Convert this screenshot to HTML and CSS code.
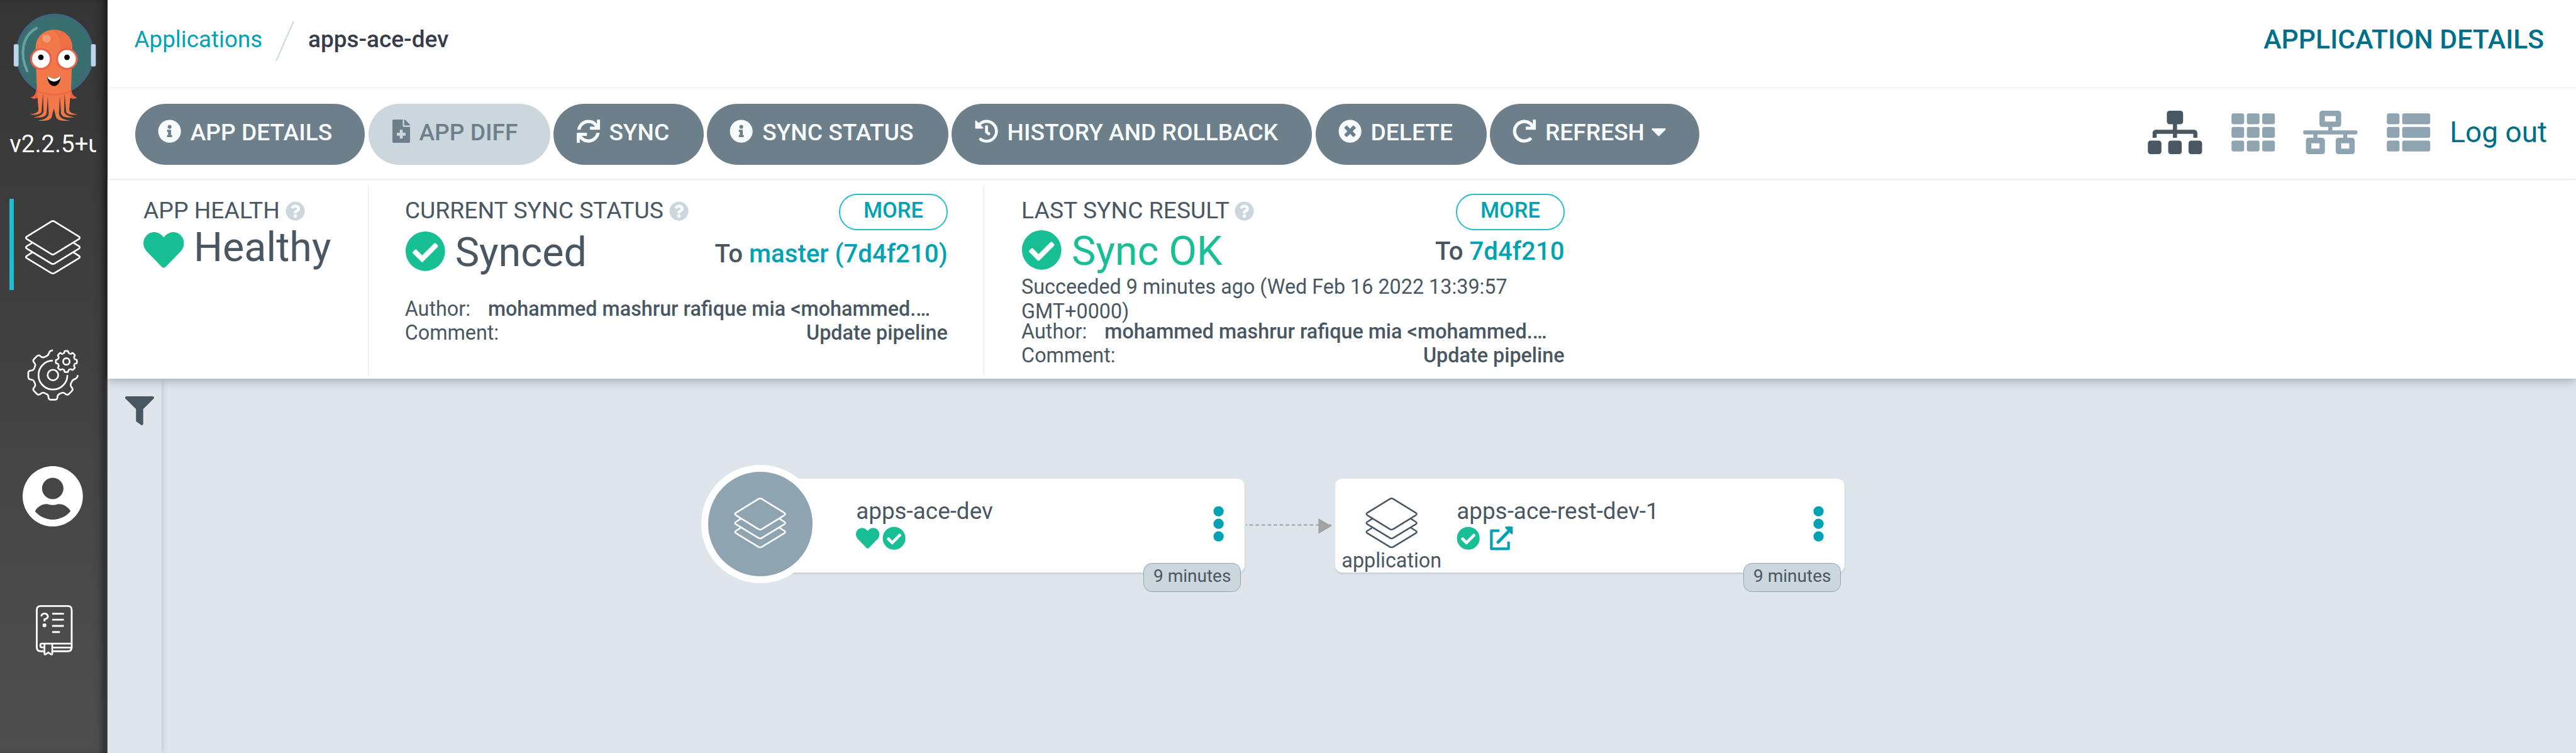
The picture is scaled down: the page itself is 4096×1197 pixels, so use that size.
FILE: index.html
```html
<!DOCTYPE html>
<html lang="en">
<head>
<meta charset="utf-8">
<title>apps-ace-dev - Application Details</title>
<link rel="stylesheet" href="styles.css">
</head>
<body>
<svg class="defs" aria-hidden="true">
  <symbol id="i-info" viewBox="0 0 512 512"><path d="M256 8C119.043 8 8 119.083 8 256c0 136.997 111.043 248 248 248s248-111.003 248-248C504 119.083 392.957 8 256 8zm0 110c23.196 0 42 18.804 42 42s-18.804 42-42 42-42-18.804-42-42 18.804-42 42-42zm56 254c0 6.627-5.373 12-12 12h-88c-6.627 0-12-5.373-12-12v-24c0-6.627 5.373-12 12-12h12v-64h-12c-6.627 0-12-5.373-12-12v-24c0-6.627 5.373-12 12-12h64c6.627 0 12 5.373 12 12v100h12c6.627 0 12 5.373 12 12v24z"/></symbol>
  <symbol id="i-check" viewBox="0 0 512 512"><path d="M504 256c0 136.967-111.033 248-248 248S8 392.967 8 256 119.033 8 256 8s248 111.033 248 248zM227.314 387.314l184-184c6.248-6.248 6.248-16.379 0-22.627l-22.627-22.627c-6.248-6.249-16.379-6.249-22.628 0L216 308.118l-70.059-70.059c-6.248-6.248-16.379-6.248-22.628 0l-22.627 22.627c-6.248 6.248-6.248 16.379 0 22.627l104 104c6.249 6.249 16.379 6.249 22.628.001z"/></symbol>
  <symbol id="i-times" viewBox="0 0 512 512"><path d="M256 8C119 8 8 119 8 256s111 248 248 248 248-111 248-248S393 8 256 8zm121.6 313.1c4.7 4.7 4.7 12.3 0 17L338 377.6c-4.7 4.7-12.3 4.7-17 0L256 312l-65.1 65.6c-4.7 4.7-12.3 4.7-17 0L134.4 338c-4.7-4.7-4.7-12.3 0-17l65.6-65-65.6-65.1c-4.7-4.7-4.7-12.3 0-17l39.6-39.6c4.7-4.7 12.3-4.7 17 0l65 65.7 65.1-65.6c4.7-4.7 12.3-4.7 17 0l39.6 39.6c4.7 4.7 4.7 12.3 0 17L312 256l65.6 65.1z"/></symbol>
  <symbol id="i-help" viewBox="0 0 512 512"><path d="M504 256c0 136.997-111.043 248-248 248S8 392.997 8 256C8 119.083 119.043 8 256 8s248 111.083 248 248zM262.655 90c-54.497 0-89.255 22.957-116.549 63.758-3.536 5.286-2.353 12.415 2.715 16.258l34.699 26.31c5.205 3.947 12.621 3.008 16.665-2.122 17.864-22.658 30.113-35.797 57.303-35.797 20.429 0 45.698 13.148 45.698 32.958 0 14.976-12.363 22.667-32.534 33.976C247.128 238.528 216 254.941 216 296v4c0 6.627 5.373 12 12 12h56c6.627 0 12-5.373 12-12v-1.333c0-28.462 83.186-29.647 83.186-106.667 0-58.002-60.165-102-116.531-102zM256 338c-25.365 0-46 20.635-46 46 0 25.364 20.635 46 46 46s46-20.636 46-46c0-25.365-20.635-46-46-46z"/></symbol>
  <symbol id="i-heart" viewBox="0 0 512 512"><path d="M462.3 62.6C407.5 15.9 326 24.3 275.7 76.2L256 96.5l-19.7-20.3C186.1 24.3 104.5 15.9 49.7 62.6c-62.8 53.6-66.1 149.8-9.9 207.9l193.5 199.8c12.5 12.9 32.8 12.9 45.3 0l193.5-199.8c56.3-58.1 53-154.3-9.8-207.9z"/></symbol>
  <symbol id="i-file" viewBox="0 0 384 512"><path d="M377 105L279.1 7c-4.5-4.5-10.6-7-17-7H256v128h128v-6.1c0-6.3-2.5-12.4-7-16.9zm-153 31V0H24C10.7 0 0 10.7 0 24v464c0 13.3 10.7 24 24 24h336c13.3 0 24-10.7 24-24V160H248c-13.2 0-24-10.8-24-24zm64 160v48c0 4.4-3.6 8-8 8h-56v56c0 4.4-3.6 8-8 8h-48c-4.4 0-8-3.6-8-8v-56h-56c-4.4 0-8-3.6-8-8v-48c0-4.4 3.6-8 8-8h56v-56c0-4.4 3.6-8 8-8h48c4.4 0 8 3.6 8 8v56h56c4.4 0 8 3.6 8 8z"/></symbol>
  <symbol id="i-sync" viewBox="0 0 512 512"><path d="M440.65 12.57l4 82.77A247.16 247.16 0 0 0 255.83 8C134.73 8 33.91 94.92 12.29 209.82A12 12 0 0 0 24.09 224h49.05a12 12 0 0 0 11.67-9.26 175.91 175.91 0 0 1 317-56.94l-101.46-4.86a12 12 0 0 0-12.57 12v47.41a12 12 0 0 0 12 12H500a12 12 0 0 0 12-12V12a12 12 0 0 0-12-12h-47.37a12 12 0 0 0-11.98 12.57zM255.83 432a175.61 175.61 0 0 1-146-77.8l101.8 4.87a12 12 0 0 0 12.57-12v-47.4a12 12 0 0 0-12-12H12a12 12 0 0 0-12 12V500a12 12 0 0 0 12 12h47.35a12 12 0 0 0 12-12.6l-4.15-82.57A247.17 247.17 0 0 0 255.83 504c121.11 0 221.93-86.92 243.55-201.82a12 12 0 0 0-11.8-14.18h-49.05a12 12 0 0 0-11.67 9.26A175.86 175.86 0 0 1 255.83 432z"/></symbol>
  <symbol id="i-history" viewBox="0 0 512 512"><path d="M504 255.531c.253 136.64-111.18 248.372-247.82 248.468-59.015.042-113.223-20.53-155.822-54.911-11.077-8.94-11.905-25.541-1.839-35.607l11.267-11.267c8.609-8.609 22.353-9.551 31.891-1.984C173.062 425.135 212.781 440 256 440c101.705 0 184-82.311 184-184 0-101.705-82.311-184-184-184-48.814 0-93.149 18.969-126.068 49.932l50.754 50.754c10.08 10.08 2.941 27.314-11.313 27.314H24c-8.837 0-16-7.163-16-16V38.627c0-14.254 17.234-21.393 27.314-11.314l49.372 49.372C129.209 34.136 189.552 8 256 8c136.81 0 247.747 110.78 248 247.531zm-180.912 78.784l9.823-12.63c8.138-10.463 6.253-25.542-4.21-33.679L288 256.349V152c0-13.255-10.745-24-24-24h-16c-13.255 0-24 10.745-24 24v135.651l65.409 50.874c10.463 8.137 25.541 6.253 33.679-4.21z"/></symbol>
  <symbol id="i-redo" viewBox="0 0 512 512"><path d="M500.33 0h-47.41a12 12 0 0 0-12 12.57l4 82.76A247.42 247.42 0 0 0 256 8C119.34 8 7.9 119.53 8 256.19 8.1 393.07 119.1 504 256 504a247.1 247.1 0 0 0 166.18-63.91 12 12 0 0 0 .48-17.43l-34-34a12 12 0 0 0-16.38-.55A176 176 0 1 1 402.1 157.8l-101.53-4.87a12 12 0 0 0-12.57 12v47.41a12 12 0 0 0 12 12h200.33a12 12 0 0 0 12-12V12a12 12 0 0 0-12-12z"/></symbol>
  <symbol id="i-stack" viewBox="0 0 92 90"><g fill="none" stroke="currentColor" stroke-width="2.8" stroke-linejoin="round"><path d="M43 2.4Q46 .6 49 2.4L89 27Q92.4 29.2 89 31.4L49 56Q46 58 43 56L3 31.4Q-.4 29.2 3 27Z"/><path d="M80 37.4L89 43Q92.4 45.2 89 47.4L49 71.8Q46 73.6 43 71.8L3 47.4Q-.4 45.2 3 43L12 37.4"/><path d="M80 53.4L89 59Q92.4 61.2 89 63.4L49 87.6Q46 89.4 43 87.6L3 63.4Q-.4 61.2 3 59L12 53.4"/></g></symbol>
</svg>
<div class="app">
  <nav class="sidebar">
    <svg class="logo" viewBox="20 20 142 184">
      <ellipse cx="91" cy="90" rx="63" ry="65.5" fill="#3a6f70" stroke="#406581" stroke-width="3.4"/>
      <rect x="23" y="73.5" width="8" height="37" rx="2.5" fill="#bdd5ea"/>
      <rect x="151.200" y="73.500" width="8" height="37" rx="2.5" fill="#bdd5ea"/>
      <path d="M60.700 47C36 60 33 92 45.300 118" fill="none" stroke="#69a19f" stroke-width="4.200" stroke-linecap="round"/>
      <path d="M61 145C60 156 57 161 51 161.500C53 165 63 165 66 160ZM118 145C119 156 122 161 128 161.500C126 165 116 165 113 160Z" fill="#ea6148"/>
      <path d="M59.300 80C59.300 62 72 49.400 90 49.400S120.300 62 120.300 80L118.500 140L115 182C115 187 121 189 129.500 190C122 191.500 113 191 110 186L107.500 155L106.500 185C107 190 113 193.500 124 194.500C115 196 103 195.500 101.500 188L99.500 160L98 188C98 195 105 199 116 200C109 201.500 95 201 93 194L89.500 180L86 194C84 201 70 201.500 63 200C74 199 81 195 81 188L79.500 160L77.500 188C76 195.500 64 196 55.700 194.500C66 193.500 72 190 72.500 185L71.500 155L69 186C66 191 56 191.500 49 190C58 189 64 187 64 182L61 140Z" fill="#f27849"/>
      <path d="M90 49.400C108 49.400 120.300 62 120.300 80L119.500 100L100 92C102 72 98 56 88 49.500Z" fill="#ee6e46"/>
      <path d="M61.500 149Q90 163 118 149L117.700 153Q90 164 61.900 153Z" fill="#ee6a44"/>
      <circle cx="68.200" cy="98" r="18" fill="#ea6148"/><circle cx="111.200" cy="98" r="18" fill="#ea6148"/>
      <circle cx="68.200" cy="98" r="14.800" fill="#fff"/><circle cx="111.200" cy="98" r="14.800" fill="#fff"/>
      <circle cx="68" cy="95.200" r="4.600"/><circle cx="111.400" cy="95.200" r="4.600"/>
      <ellipse cx="77.300" cy="64" rx="6.800" ry="6.800" fill="#f49b79"/>
      <path d="M78.700 125.700Q90 135 101 125.700C101 136 96 143 89.800 143S78.700 136 78.700 125.700Z"/>
      <path d="M78.700 125.700Q90 135 101 125.700Q100.500 129 99.500 131Q90 140 80.300 131Q79 129 78.700 125.700Z" fill="#fff"/>
    </svg>
    <div class="version">v2.2.5+unknown</div>
    <a class="nav-item nav-item--active"><svg class="nav-stack"><use href="#i-stack"/></svg></a>
    <a class="nav-item">
      <svg class="nav-gears" viewBox="-43 -43 86 86" fill="none" stroke="#fff" stroke-width="2.800">
        <defs>
          <path id="tooth" d="M-12.600-30.500C-9.500-31.800-7.800-32.500-7.600-36C-7.500-39.500-6-41-3-41H3C6-41 7.500-39.500 7.600-36C7.800-32.500 9.500-31.800 12.600-30.500"/>
          <path id="cog" d="M-5.400-13.100C-4.100-13.600-3.400-14-3.300-15.400C-3.300-16.800-2.600-17.500-1.300-17.500H1.300C2.600-17.500 3.300-16.800 3.300-15.400C3.400-14 4.100-13.600 5.400-13.100"/>
        </defs>
        <path d="M-12.600-30.500C-9.500-31.800-7.800-32.500-7-35.500C-6-39-3.500-41 0-41"/>
        <path d="M41 0C41 3.500 39 6 35.500 7C32.500 7.800 31.800 9.500 30.500 12.600"/>
        <use href="#tooth" transform="rotate(135)"/><use href="#tooth" transform="rotate(180)"/><use href="#tooth" transform="rotate(225)"/><use href="#tooth" transform="rotate(270)"/><use href="#tooth" transform="rotate(315)"/>
        <path d="M0-24A24 24 0 1 0 24 0"/><circle r="8.800"/>
        <g transform="translate(22.300 -22.500)"><circle r="5.400"/><use href="#cog"/><use href="#cog" transform="rotate(45)"/><use href="#cog" transform="rotate(90)"/><use href="#cog" transform="rotate(135)"/><use href="#cog" transform="rotate(180)"/><use href="#cog" transform="rotate(225)"/><use href="#cog" transform="rotate(270)"/><use href="#cog" transform="rotate(315)"/></g>
      </svg>
    </a>
    <a class="nav-item"><svg class="nav-user" viewBox="0 8 496 496" fill="#fff"><path d="M248 8C111 8 0 119 0 256s111 248 248 248 248-111 248-248S385 8 248 8zm0 96c48.600 0 88 39.400 88 88s-39.400 88-88 88-88-39.400-88-88 39.400-88 88-88zm0 344c-58.700 0-111.300-26.600-146.500-68.200 18.800-35.400 55.600-59.800 98.500-59.800 2.400 0 4.800.4 7.100 1.100 13 4.200 26.600 6.900 40.900 6.900 14.300 0 28-2.700 40.900-6.900 2.300-.7 4.700-1.100 7.100-1.100 42.900 0 79.700 24.400 98.500 59.800C359.300 421.400 306.700 448 248 448z"/></svg></a>
    <a class="nav-item">
      <svg class="nav-book" viewBox="0 0 61 84" fill="none" stroke="#fff" stroke-width="3">
        <path d="M13 76.500H8Q1.500 76.500 1.500 70V8Q1.500 1.500 8 1.500H53Q59.500 1.500 59.500 8V70Q59.500 76.500 53 76.500H28"/>
        <path d="M59 63.800H10Q7.500 63.800 7.500 66.300V67.500Q7.500 70 10 70H13M28 70.300H59" stroke-width="2.800"/>
        <path d="M14.300 64V80.500Q14.300 82.500 16.500 81.500L20.700 78.500L25 81.500Q27.200 82.500 27.200 80.500V64" stroke-width="2.800"/>
        <path d="M27 14.200H46.500M27 24.200H46.500M27 34.400H46.500M27 44.600H40"/>
        <path d="M9 18.500Q10 14 14.500 14T20 18.500Q20 22 14.300 23.500V27"/><circle cx="14.300" cy="33.500" r="1.700"/>
      </svg>
    </a>
  </nav>
  <main class="page">
    <header class="topbar">
      <div class="crumbs">
        <a class="crumb-link">Applications</a>
        <svg class="crumb-sep" viewBox="0 0 31 66"><path d="M30 0L1 66" stroke="#ccd6dd" stroke-width="2"/></svg>
        <span class="crumb-current">apps-ace-dev</span>
      </div>
      <div class="page-title">APPLICATION DETAILS</div>
    </header>
    <div class="toolbar">
      <div class="actions">
        <button class="btn btn--details"><svg class="ico"><use href="#i-info"/></svg>APP DETAILS</button>
        <button class="btn btn--diff btn--disabled"><svg class="ico ico--file"><use href="#i-file"/></svg>APP DIFF</button>
        <button class="btn btn--sync"><svg class="ico"><use href="#i-sync"/></svg>SYNC</button>
        <button class="btn btn--status"><svg class="ico"><use href="#i-info"/></svg>SYNC STATUS</button>
        <button class="btn btn--history"><svg class="ico"><use href="#i-history"/></svg>HISTORY AND ROLLBACK</button>
        <button class="btn btn--delete"><svg class="ico"><use href="#i-times"/></svg>DELETE</button>
        <button class="btn btn--refresh"><svg class="ico"><use href="#i-redo"/></svg>REFRESH<svg class="caret" viewBox="0 0 24 13"><path d="M1.500 0H22.500Q24.500 .5 23 2.500L13 12.500Q12 13.300 11 12.500L1 2.500Q-.5 .5 1.500 0Z"/></svg></button>
      </div>
      <div class="views">
        <svg class="view view--wide view--active" viewBox="0 0 640 512"><path d="M128 352H32c-17.670 0-32 14.330-32 32v96c0 17.670 14.330 32 32 32h96c17.670 0 32-14.330 32-32v-96c0-17.670-14.330-32-32-32zm-24-80h192v48h48v-48h192v48h48v-57.590c0-21.170-17.230-38.410-38.410-38.410H344v-64h40c17.670 0 32-14.330 32-32V32c0-17.670-14.330-32-32-32H256c-17.670 0-32 14.330-32 32v96c0 17.670 14.330 32 32 32h40v64H94.410C73.230 224 56 241.230 56 262.410V320h48v-48zm264 80h-96c-17.670 0-32 14.330-32 32v96c0 17.670 14.330 32 32 32h96c17.670 0 32-14.330 32-32v-96c0-17.670-14.330-32-32-32zm240 0h-96c-17.670 0-32 14.330-32 32v96c0 17.670 14.330 32 32 32h96c17.670 0 32-14.330 32-32v-96c0-17.670-14.330-32-32-32z"/></svg>
        <svg class="view" viewBox="0 0 512 512"><rect y="32" width="149.300" height="128" rx="24"/><rect x="181.300" y="32" width="149.300" height="128" rx="24"/><rect x="362.700" y="32" width="149.300" height="128" rx="24"/><rect y="192" width="149.300" height="128" rx="24"/><rect x="181.300" y="192" width="149.300" height="128" rx="24"/><rect x="362.700" y="192" width="149.300" height="128" rx="24"/><rect y="352" width="149.300" height="128" rx="24"/><rect x="181.300" y="352" width="149.300" height="128" rx="24"/><rect x="362.700" y="352" width="149.300" height="128" rx="24"/></svg>
        <svg class="view view--wide" viewBox="0 0 640 512"><path d="M640 264v-16c0-8.840-7.160-16-16-16H344v-40h72c17.670 0 32-14.330 32-32V32c0-17.670-14.330-32-32-32H224c-17.670 0-32 14.330-32 32v128c0 17.670 14.330 32 32 32h72v40H16c-8.840 0-16 7.160-16 16v16c0 8.840 7.160 16 16 16h104v40H64c-17.670 0-32 14.330-32 32v128c0 17.670 14.330 32 32 32h160c17.670 0 32-14.330 32-32V352c0-17.670-14.330-32-32-32h-56v-40h304v40h-56c-17.670 0-32 14.330-32 32v128c0 17.670 14.330 32 32 32h160c17.670 0 32-14.330 32-32V352c0-17.670-14.330-32-32-32h-56v-40h104c8.840 0 16-7.160 16-16zM256 128V64h128v64H256zm-64 320H96v-64h96v64zm352 0h-96v-64h96v64z"/></svg>
        <svg class="view" viewBox="0 0 512 512"><rect y="32" width="149.300" height="128" rx="24"/><rect x="181.300" y="32" width="330.700" height="128" rx="24"/><rect y="192" width="149.300" height="128" rx="24"/><rect x="181.300" y="192" width="330.700" height="128" rx="24"/><rect y="352" width="149.300" height="128" rx="24"/><rect x="181.300" y="352" width="330.700" height="128" rx="24"/></svg>
        <a class="logout">Log out</a>
      </div>
    </div>
    <section class="summary">
      <div class="col col--health">
        <div class="col-head"><span class="label">APP HEALTH<svg class="help"><use href="#i-help"/></svg></span></div>
        <div class="value"><svg class="big-ico big-ico--heart"><use href="#i-heart"/></svg>Healthy</div>
      </div>
      <div class="col col--sync">
        <div class="col-head"><span class="label">CURRENT SYNC STATUS<svg class="help"><use href="#i-help"/></svg></span><button class="more">MORE</button></div>
        <div class="value"><svg class="big-ico"><use href="#i-check"/></svg>Synced<span class="target">To <a>master (7d4f210)</a></span></div>
        <div class="meta">
          <div class="row"><span class="key">Author:</span><b>mohammed mashrur rafique mia &lt;mohammed.…</b></div>
          <div class="row row--split"><span>Comment:</span><b>Update pipeline</b></div>
        </div>
      </div>
      <div class="col col--result">
        <div class="col-head"><span class="label">LAST SYNC RESULT<svg class="help"><use href="#i-help"/></svg></span><button class="more">MORE</button></div>
        <div class="value value--ok"><svg class="big-ico"><use href="#i-check"/></svg>Sync OK<span class="target">To <a>7d4f210</a></span></div>
        <p class="when">Succeeded 9 minutes ago (Wed Feb 16 2022 13:39:57<br>GMT+0000)</p>
        <div class="meta">
          <div class="row"><span class="key">Author:</span><b>mohammed mashrur rafique mia &lt;mohammed.…</b></div>
          <div class="row row--split"><span>Comment:</span><b>Update pipeline</b></div>
        </div>
      </div>
    </section>
    <section class="workspace">
      <aside class="filter"><svg class="funnel" viewBox="0 0 512 512"><path d="M487.976 0H24.028C2.710 0-8.047 25.866 7.058 40.971L192 225.941V432c0 7.831 3.821 15.170 10.237 19.662l80 55.980C298.020 518.690 320 507.493 320 487.980V225.941l184.947-184.970C520.021 25.896 509.338 0 487.976 0z"/></svg></aside>
      <div class="graph">
        <svg class="edge" viewBox="0 0 148 26"><path d="M0 11H146" stroke="#8fa4b1" stroke-width="2" stroke-dasharray="6 4" stroke-dashoffset="4"/><path d="M120.500 0V25.500L142.500 12.800Z" fill="#a3a3a3"/></svg>
        <div class="node node--root">
          <div class="node-circle"><svg class="node-stack"><use href="#i-stack"/></svg></div>
          <div class="node-body"><div class="node-name">apps-ace-dev</div><div class="node-icons"><svg class="small-ico"><use href="#i-heart"/></svg><svg class="small-ico"><use href="#i-check"/></svg></div></div>
          <svg class="dots" viewBox="0 0 18 60"><circle cx="9" cy="9.200" r="8.500"/><circle cx="9" cy="30" r="8.500"/><circle cx="9" cy="50.800" r="8.500"/></svg>
          <span class="age">9 minutes</span>
        </div>
        <div class="node node--child">
          <div class="node-kind"><svg class="node-stack"><use href="#i-stack"/></svg><span>application</span></div>
          <div class="node-body"><div class="node-name">apps-ace-rest-dev-1</div><div class="node-icons"><svg class="small-ico"><use href="#i-check"/></svg><svg class="link-ico" viewBox="0 0 38 39"><path d="M16 7H2.500V37H31V25" fill="none" stroke="#00a2b3" stroke-width="4.400" stroke-linejoin="round"/><path d="M13.500 26L33 6" stroke="#00a2b3" stroke-width="5.200" stroke-linecap="round"/><path d="M26 0H36.500Q38 0 38 1.500V12Q36.500 13.500 35 12L26 3Q24.800 1 26 0Z" fill="#00a2b3"/></svg></div></div>
          <svg class="dots" viewBox="0 0 18 60"><circle cx="9" cy="9.200" r="8.500"/><circle cx="9" cy="30" r="8.500"/><circle cx="9" cy="50.800" r="8.500"/></svg>
          <span class="age">9 minutes</span>
        </div>
      </div>
    </section>
  </main>
</div>
</body>
</html>
```
FILE: styles.css
```css
/* The layout is 427.6rem wide and scales with the window. */
html { font-size: calc(100vw / 427.6); }
*, *::before, *::after { box-sizing: border-box; }
body { margin: 0; font-family: Roboto, "Liberation Sans", sans-serif; font-size: 3.9rem; color: #495763; background: #dee6eb; overflow: hidden; }
button { font: inherit; border: 0; margin: 0; }
svg { display: block; flex: none; overflow: visible; }
.defs { position: absolute; width: 0; height: 0; }
.app { display: flex; width: 100vw; height: 100vh; }

/* Sidebar */
.sidebar { flex: none; width: 17.8rem; height: 100%; overflow: hidden; display: flex; flex-direction: column; background: linear-gradient(#353535, #4f4f4f); box-shadow: inset -1.4rem 0 1.6rem -1rem #111; }
.logo { width: 14.2rem; height: 18.4rem; margin: 2rem 0 0 2rem; }
.version { flex: none; width: 14.4rem; height: 5rem; margin: .95rem 0 6.6rem 1.6rem; line-height: 5rem; font-size: 4rem; color: #fff; overflow: hidden; white-space: nowrap; }
.nav-item { flex: none; display: flex; align-items: center; justify-content: center; height: 15.2rem; margin: 0 1.8rem 6.1rem 1.6rem; padding-right: 0; color: #fff; }
.nav-item { border-left: .8rem solid transparent; border-right: .8rem solid transparent; }
.nav-item--active { border-left-color: #1fbdd0; margin-bottom: 6.4rem; }
.nav-stack { width: 9.2rem; height: 9rem; margin-top: 1rem; }
.nav-gears { width: 8.6rem; height: 8.6rem; }
.nav-item:nth-of-type(2) { height: 15.4rem; margin-bottom: 4.8rem; }
.nav-user { width: 10rem; height: 10rem; }
.nav-item:nth-of-type(3) { height: 15.2rem; margin-bottom: 7.1rem; }
.nav-book { width: 6.1rem; height: 8.4rem; margin-left: .4rem; }

/* Top bar */
.page { flex: 1; min-width: 0; display: flex; flex-direction: column; }
.topbar { flex: none; height: 14.6rem; display: flex; justify-content: space-between; align-items: center; padding: 0 5.3rem 1.5rem 4.5rem; background: #fff; border-bottom: .2rem solid #edf2f6; }
.crumbs { display: flex; align-items: center; }
.crumb-link { font-size: 3.84rem; color: #00a2b3; }
.crumb-sep { width: 3.1rem; height: 6.6rem; margin: .6rem 2.3rem 0 2.2rem; }
.crumb-current { font-size: 3.86rem; font-weight: 500; color: #363c4a; }
.page-title { font-size: 4.46rem; font-weight: 500; color: #006f8a; }

/* Toolbar */
.toolbar { flex: none; height: 15.2rem; display: flex; justify-content: space-between; align-items: center; padding: 0 4.8rem 0 4.6rem; background: #fff; border-bottom: .2rem solid #edf2f6; }
.actions { display: flex; gap: .55rem; padding-top: .3rem; }
.btn { flex: none; display: flex; align-items: center; height: 10.2rem; padding: 0 0 .7rem 3.8rem; border-radius: 5.1rem; background: #6d7f8b; color: #f8fbfb; font-size: 3.88rem; font-weight: 500; white-space: nowrap; }
.btn--disabled { background: #ccd6dd; color: #6d7f8b; }
.btn--details { width: 38.2rem; }
.btn--diff { width: 30.2rem; padding-left: 4rem; }
.btn--sync { width: 24.9rem; }
.btn--status { width: 40.1rem; }
.btn--history { width: 59.8rem; }
.btn--delete { width: 28.4rem; }
.btn--refresh { width: 34.8rem; }
.ico { width: 3.9rem; height: 3.9rem; margin: -.3rem 1.5rem 0 0; fill: currentColor; }
.ico--file { width: 2.925rem; }
.caret { width: 2.4rem; height: 1.3rem; margin-left: 1.1rem; fill: currentColor; }
.views { display: flex; align-items: center; gap: 4.75rem; padding-bottom: .45rem; }
.view { width: 7.25rem; height: 7.2rem; fill: #8fa4b1; }
.view--wide { width: 9.05rem; }
.view--active { fill: #495763; }
.logout { margin-left: -1.5rem; font-size: 4.8rem; color: #006f8a; }

/* Status summary */
.summary { position: relative; z-index: 1; flex: none; height: 33rem; display: flex; padding: 1rem 0 .6rem; background: #fff; box-shadow: 0 .3rem 1.6rem #9aaab0; clip-path: inset(0 0 -3rem 0); }
.col { padding: 1.4rem 6rem 0; border-right: .2rem solid #dee6eb; }
.col--health { width: 43.4rem; padding-right: 0; }
.col--sync { width: 102.2rem; }
.col--result { width: 102.3rem; padding-left: 6.15rem; border: 0; }
.col-head { display: flex; justify-content: space-between; align-items: center; height: 6rem; }
.label { display: flex; align-items: center; padding-bottom: .7rem; white-space: nowrap; }
.help { width: 3.25rem; height: 3.25rem; margin: .3rem 0 0 .9rem; fill: #ccd6dd; }
.more { width: 18rem; height: 6rem; padding: 0 0 .6rem; border: .3rem solid #22bed0; border-radius: 3rem; background: #fff; color: #00a2b3; font-size: 3.6rem; font-weight: 500; line-height: 1; }
.value { display: flex; align-items: center; height: 7rem; margin-top: .2rem; font-size: 6.75rem; line-height: 7rem; white-space: nowrap; }
.col--health .value { margin-top: -.6rem; }
.col--result .value { margin-top: 0; }
.value--ok { color: #18be94; }
.big-ico { width: 6.75rem; height: 6.75rem; margin: -.45rem 1.6rem 0 0; fill: #18be94; }
.big-ico--heart { margin-top: .8rem; }
.target { margin: .45rem 0 0 auto; font-size: 4.2rem; font-weight: 500; color: #495763; }
.target a { color: #00a2b3; }
.col--result .target { margin-top: .1rem; }
.meta, .when { font-size: 3.375rem; line-height: 4rem; white-space: nowrap; }
.meta { margin-top: 3.85rem; }
.when { margin: .45rem 0 0; }
.col--result .meta { margin-top: -.6rem; }
.meta b { font-weight: 500; }
.row { display: flex; }
.row--split { justify-content: space-between; }
.key { width: 13.8rem; }

/* Resource graph */
.workspace { flex: 1; display: flex; background: #dee6eb; }
.filter { flex: none; width: 9rem; padding: 3rem 0 0 3rem; box-shadow: .2rem 0 .8rem #b9c5ca; }
.funnel { width: 4.8rem; height: 4.8rem; fill: #495763; }
.graph { position: relative; flex: 1; }
.edge { position: absolute; left: 180rem; top: 23.2rem; width: 14.8rem; height: 2.6rem; }
.node { position: absolute; top: 16.6rem; width: 84.6rem; height: 15.6rem; display: flex; border-radius: 1.2rem; background: #fff; box-shadow: .1rem .3rem .2rem #ccd6dd; }
.node--root { left: 95.2rem; }
.node--child { left: 194.8rem; }
.node-circle { flex: none; display: flex; align-items: center; justify-content: center; width: 19.6rem; height: 19.6rem; margin: -2.2rem 0 0 -5.6rem; border: 1.2rem solid #fff; border-radius: 50%; background: #8fa4b1; color: #fff; }
.node-stack { width: 8.7rem; height: 8.4rem; }
.node-circle .node-stack { margin-top: -.4rem; }
.node-kind { flex: none; display: flex; flex-direction: column; align-items: center; width: 18.8rem; padding-top: 3.2rem; font-size: 3.375rem; line-height: 4rem; }
.node-body { flex: 1; padding: 3.2rem 0 0 6.1rem; }
.node--child .node-body { padding-left: 1.4rem; }
.node-name { font-size: 3.85rem; line-height: 4.6rem; white-space: nowrap; }
.node-icons { display: flex; gap: .5rem; padding-top: .15rem; }
.small-ico { width: 3.9rem; height: 3.9rem; fill: #18be94; }
.link-ico { width: 3.8rem; height: 3.9rem; margin-left: 1.1rem; }
.dots { width: 1.8rem; height: 6rem; margin: 4.55rem 3.45rem 0 0; fill: #00a2b3; }
.age { position: absolute; right: .6rem; bottom: -3.2rem; width: 16.2rem; height: 4.8rem; border: .2rem solid #8fa4b1; border-radius: 1.4rem; background: #ccd6dd; font-size: 2.925rem; line-height: 4.2rem; text-align: center; }
```
